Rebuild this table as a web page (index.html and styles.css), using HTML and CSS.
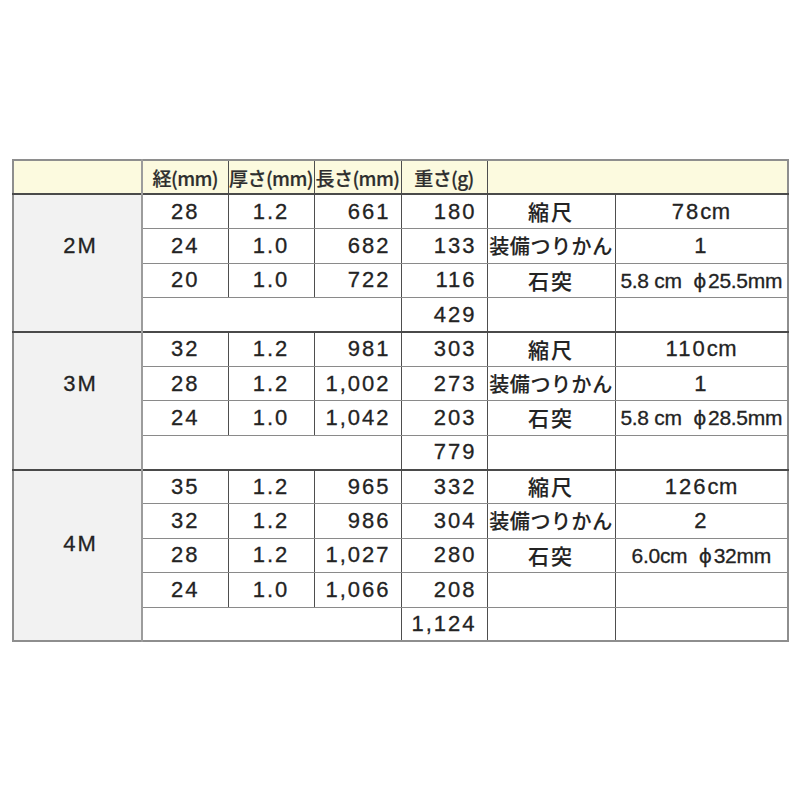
FILE: index.html
```html
<!DOCTYPE html>
<html lang="ja">
<head>
<meta charset="utf-8">
<title>サイズ表</title>
<link rel="stylesheet" href="styles.css">
</head>
<body>
<div class="page">
<table class="spec">
  <colgroup>
    <col class="c-label"><col class="c-dia"><col class="c-thk"><col class="c-len"><col class="c-wt"><col class="c-key"><col class="c-val">
  </colgroup>
  <thead>
    <tr class="head">
      <th class="lbl"></th>
      <th>経(mm)</th>
      <th>厚さ(mm)</th>
      <th>長さ(mm)</th>
      <th>重さ(g)</th>
      <th colspan="2"></th>
    </tr>
  </thead>
  <tbody class="grp">
    <tr>
      <td class="lbl lbl-4" rowspan="4">2M</td>
      <td class="ctr">28</td><td class="ctr">1.2</td><td class="rt">661</td><td class="rt">180</td>
      <td class="key">縮尺</td><td class="val">78<span class="unit">cm</span></td>
    </tr>
    <tr>
      <td class="ctr">24</td><td class="ctr">1.0</td><td class="rt">682</td><td class="rt">133</td>
      <td class="key long">装備つりかん</td><td class="val">1</td>
    </tr>
    <tr>
      <td class="ctr">20</td><td class="ctr">1.0</td><td class="rt">722</td><td class="rt">116</td>
      <td class="key">石突</td><td class="val small">5.8 cm <span class="phi">ϕ</span>25.5mm</td>
    </tr>
    <tr class="total">
      <td class="first" colspan="3"></td><td class="rt">429</td><td></td><td></td>
    </tr>
  </tbody>
  <tbody class="grp">
    <tr>
      <td class="lbl lbl-4" rowspan="4">3M</td>
      <td class="ctr">32</td><td class="ctr">1.2</td><td class="rt">981</td><td class="rt">303</td>
      <td class="key">縮尺</td><td class="val">110<span class="unit">cm</span></td>
    </tr>
    <tr>
      <td class="ctr">28</td><td class="ctr">1.2</td><td class="rt">1,002</td><td class="rt">273</td>
      <td class="key long">装備つりかん</td><td class="val">1</td>
    </tr>
    <tr>
      <td class="ctr">24</td><td class="ctr">1.0</td><td class="rt">1,042</td><td class="rt">203</td>
      <td class="key">石突</td><td class="val small">5.8 cm <span class="phi">ϕ</span>28.5mm</td>
    </tr>
    <tr class="total">
      <td class="first" colspan="3"></td><td class="rt">779</td><td></td><td></td>
    </tr>
  </tbody>
  <tbody class="grp">
    <tr>
      <td class="lbl lbl-5" rowspan="5">4M</td>
      <td class="ctr">35</td><td class="ctr">1.2</td><td class="rt">965</td><td class="rt">332</td>
      <td class="key">縮尺</td><td class="val">126<span class="unit">cm</span></td>
    </tr>
    <tr>
      <td class="ctr">32</td><td class="ctr">1.2</td><td class="rt">986</td><td class="rt">304</td>
      <td class="key long">装備つりかん</td><td class="val">2</td>
    </tr>
    <tr>
      <td class="ctr">28</td><td class="ctr">1.2</td><td class="rt">1,027</td><td class="rt">280</td>
      <td class="key">石突</td><td class="val small">6.0cm <span class="phi">ϕ</span>32mm</td>
    </tr>
    <tr>
      <td class="ctr">24</td><td class="ctr">1.0</td><td class="rt">1,066</td><td class="rt">208</td>
      <td></td><td></td>
    </tr>
    <tr class="total">
      <td class="first" colspan="3"></td><td class="rt">1,124</td><td></td><td></td>
    </tr>
  </tbody>
</table>
</div>
</body>
</html>
```

FILE: styles.css
```css
html, body {
  margin: 0;
  padding: 0;
  background: #ffffff;
}

.page {
  padding: 159px 0 0 12px;
}

.spec {
  border-collapse: collapse;
  table-layout: fixed;
  width: 775px;
  font-family: "Liberation Sans", "Noto Sans CJK JP", sans-serif;
  color: #232323;
  border: 2px solid #8e8e8e;
}

.c-label { width: 129px; }
.c-dia { width: 86px; }
.c-thk { width: 86px; }
.c-len { width: 87px; }
.c-wt { width: 86px; }
.c-key { width: 128px; }
.c-val { width: 173px; }

.spec tr {
  height: 34.4px;
}

.spec th,
.spec td {
  padding: 0;
  border: 1px solid #8a8a8a;
  border-left-color: #4e4e4e;
  border-right-color: #4e4e4e;
  font-size: 22px;
  letter-spacing: 2px;
  line-height: 1;
  white-space: nowrap;
  overflow: hidden;
  -webkit-text-stroke: 0.3px #232323;
}

.head th {
  background: #fcfadf;
  font-family: "Noto Sans CJK JP", sans-serif;
  font-weight: 500;
  font-size: 19px;
  letter-spacing: -0.6px;
  text-align: center;
  vertical-align: middle;
  border-bottom-color: #9a9a9a;
  color: #2e2e2e;
  -webkit-text-stroke: 0.2px #2e2e2e;
}

.grp {
  border-top: 2px solid #4a4a4a;
}

.spec .lbl {
  background: #f2f2f2;
  text-align: center;
  vertical-align: middle;
  border-right: 2px solid #9c9c9c;
  border-left-color: #8e8e8e;
  padding-left: 6px;
}

.spec .lbl-4 {
  padding-bottom: 34px;
}

.spec .lbl-5 {
  padding-bottom: 22px;
}

.head .lbl {
  background: #fcfadf;
}

.spec .lbl + td,
.spec .first {
  border-left: 2px solid #9c9c9c;
}

.ctr {
  text-align: center;
  padding-left: 2px;
}

.rt {
  text-align: right;
  padding-right: 10px !important;
}

.key {
  text-align: center;
  font-family: "Noto Sans CJK JP", sans-serif;
  font-weight: 500;
  font-size: 21px !important;
  letter-spacing: 2px;
  -webkit-text-stroke: 0.15px #232323 !important;
}

.key.long {
  font-size: 20px !important;
  letter-spacing: 0.6px;
}

.val {
  text-align: center;
}

.unit {
  letter-spacing: 0.5px;
}

.val.small {
  font-size: 21px !important;
  letter-spacing: -0.3px;
}

.phi {
  font-family: "DejaVu Sans", sans-serif;
  font-size: 20px;
  margin-left: 6px;
  margin-right: 2px;
}
```
